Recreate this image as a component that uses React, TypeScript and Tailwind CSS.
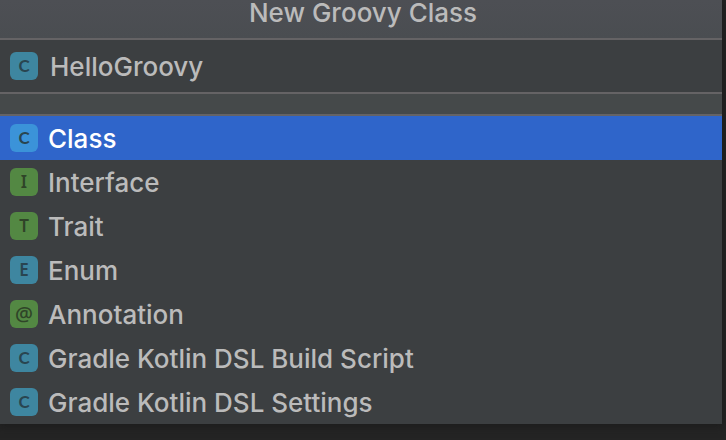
import React, { useState } from "react"
import clsx from "clsx"

interface KindBadgeProps {
  letter: string
  color: string
}

interface Kind {
  name: string
  letter: string
  color: string
}

const TEAL = "bg-[#3e86a0]"
const GREEN = "bg-[#538843]"

const kinds: Kind[] = [
  { name: "Class", letter: "C", color: TEAL },
  { name: "Interface", letter: "I", color: GREEN },
  { name: "Trait", letter: "T", color: GREEN },
  { name: "Enum", letter: "E", color: TEAL },
  { name: "Annotation", letter: "@", color: GREEN },
  { name: "Gradle Kotlin DSL Build Script", letter: "C", color: TEAL },
  { name: "Gradle Kotlin DSL Settings", letter: "C", color: TEAL },
]

const KindBadge: React.FC<KindBadgeProps> = ({ letter, color }) => {
  return (
    <span
      aria-hidden="true"
      className={clsx(
        "flex size-7 shrink-0 items-center justify-center rounded-md leading-7",
        letter === "C" && "font-['Lato',sans-serif] text-[17px] font-bold",
        letter === "@" && "font-['Noto_Sans',sans-serif] text-xl font-medium leading-6",
        letter !== "C" && letter !== "@" && "font-['Noto_Sans',sans-serif] text-[17px] font-semibold",
        color === GREEN ? "text-[#2f4428]" : "text-[#294550]",
        color
      )}
    >
      {letter}
    </span>
  )
}

const App: React.FC = () => {
  const [name, setName] = useState("HelloGroovy")
  const [selected, setSelected] = useState("Class")

  return (
    <div className="min-h-screen bg-[#242424] pr-1 pb-4 font-['Inter',sans-serif] text-[26px] leading-8 font-medium text-[#bbbbbb]">
      <main className="bg-[#3c3f41] shadow-[0_0_8px_2px_#1c1c1c]">
        <h1 className="h-10 border-b-2 border-[#656365] bg-linear-to-b from-[#4d4f54] to-[#4a4d51] pl-1 text-center leading-[26px]">
          New Groovy Class
        </h1>

        <div className="flex h-[54px] items-center gap-3 border-b-2 border-[#656365] px-2.5">
          <KindBadge letter="C" color={TEAL} />
          <input
            type="text"
            aria-label="Name"
            value={name}
            onChange={(e) => setName(e.target.value)}
            className="min-w-0 flex-1 bg-transparent pt-0.5 outline-none"
          />
        </div>

        <div className="h-[22px] border-b-2 border-[#656365] bg-[#45494a]" />

        <ul>
          {kinds.map((kind) => (
            <li key={kind.name}>
              <button
                type="button"
                aria-pressed={selected === kind.name}
                onClick={() => setSelected(kind.name)}
                className={clsx(
                  "flex h-11 w-full items-center gap-2.5 px-2.5 text-left",
                  selected === kind.name && "bg-[#2f65ca] text-white"
                )}
              >
                <KindBadge
                  letter={kind.letter}
                  color={selected === kind.name && kind.color === TEAL ? "bg-[#3b93d9]" : kind.color}
                />
                <span className="pt-0.5">{kind.name}</span>
              </button>
            </li>
          ))}
        </ul>
      </main>
    </div>
  )
}

export default App
